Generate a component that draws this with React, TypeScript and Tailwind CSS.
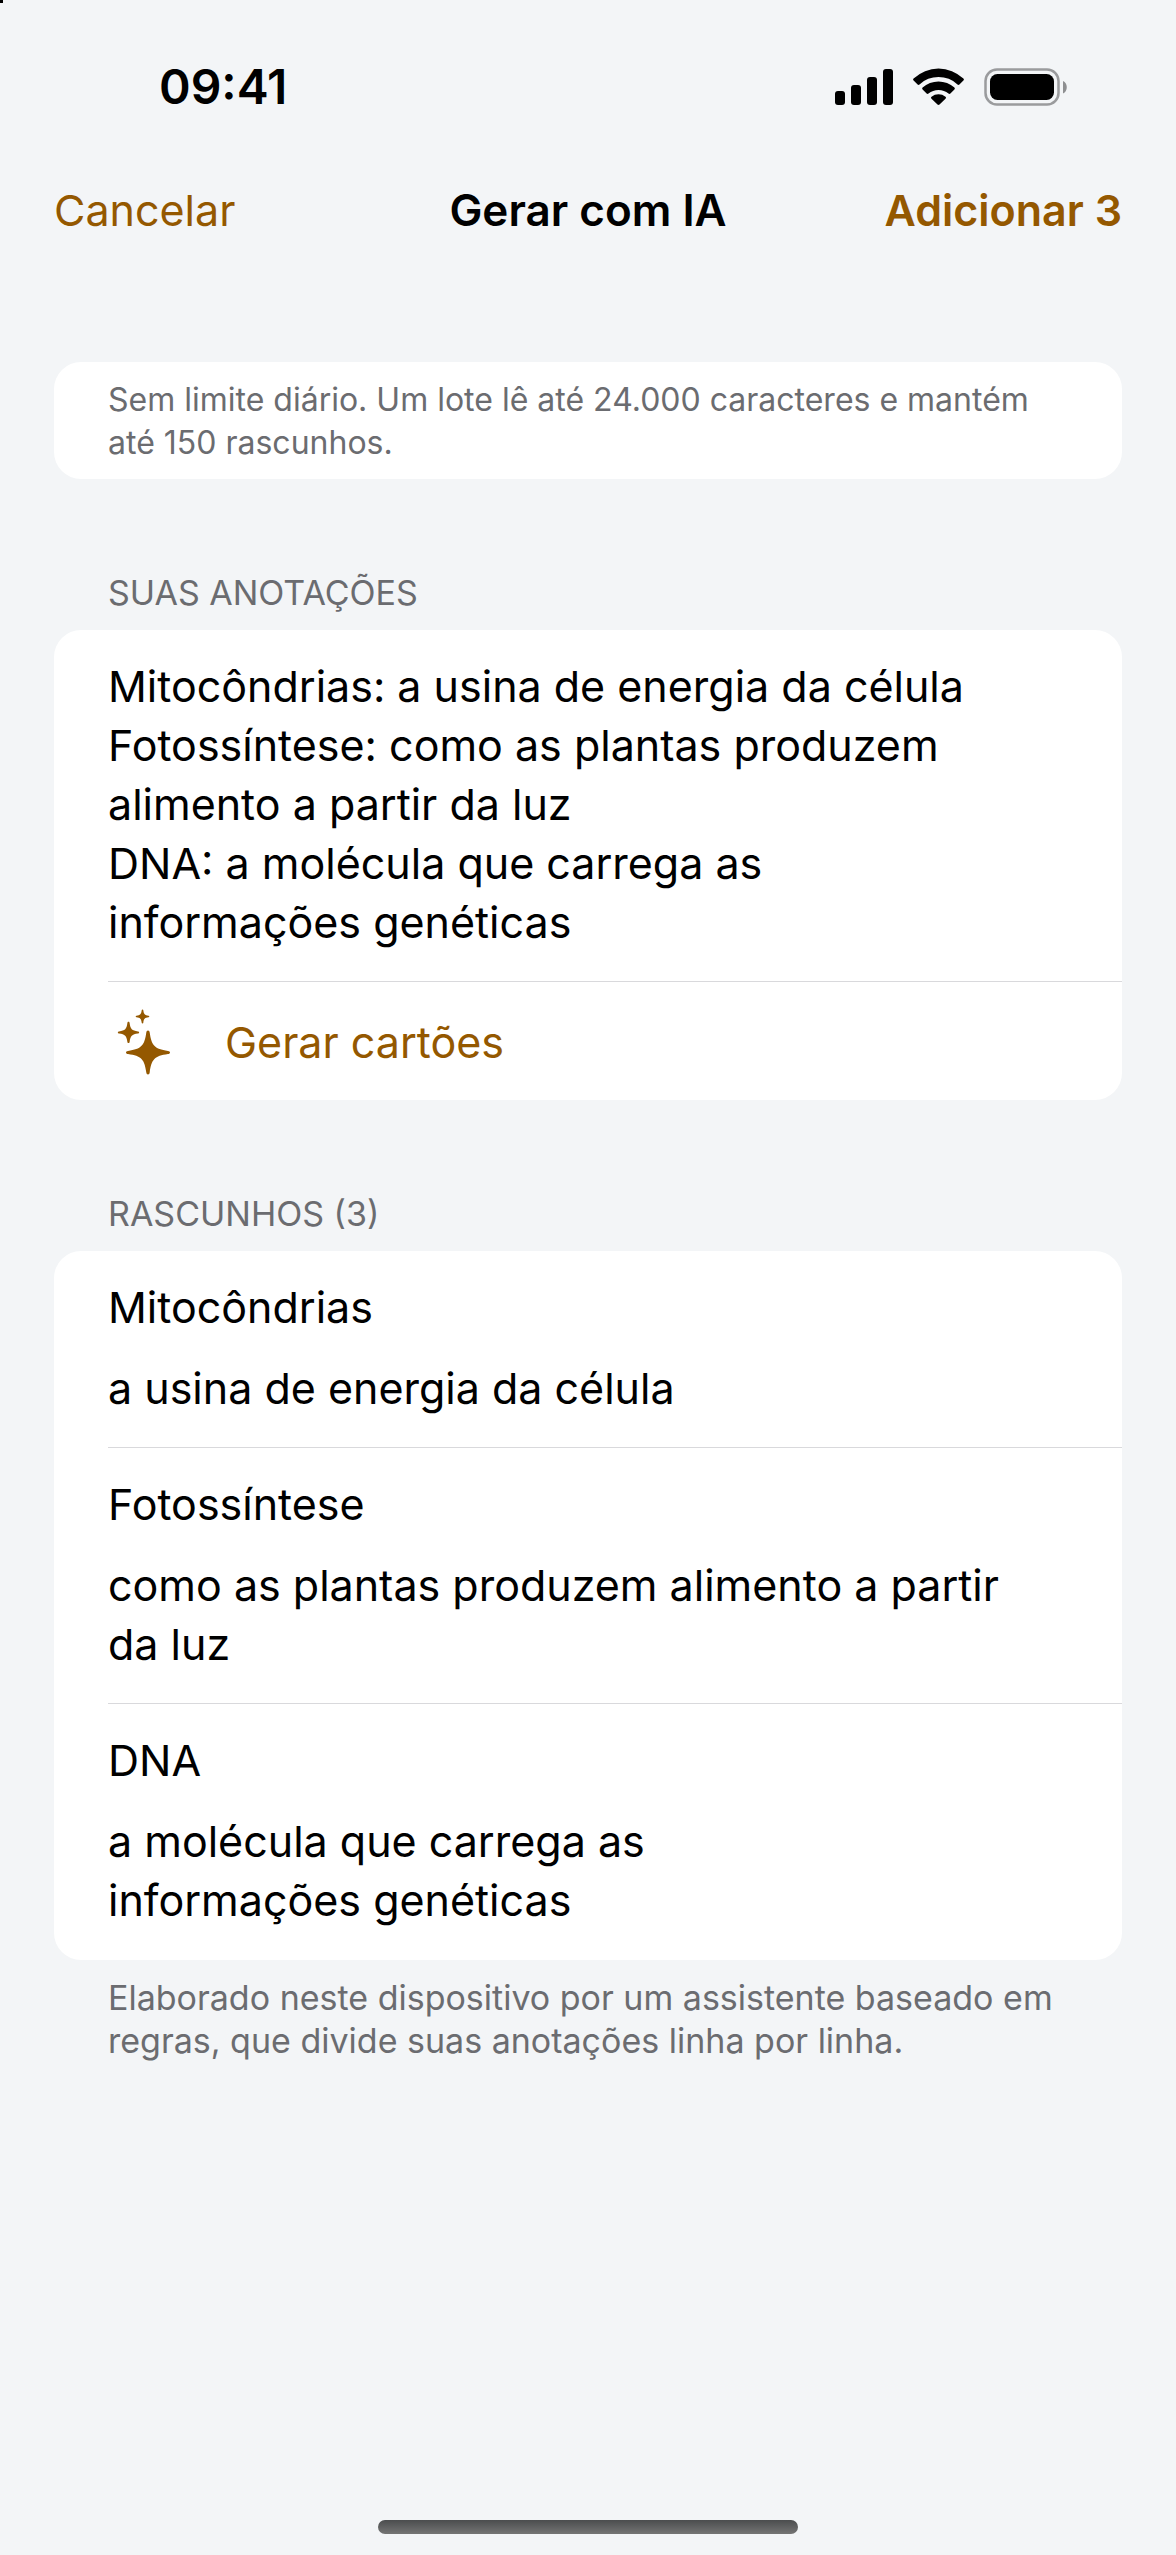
import React, { useState } from 'react';

interface Draft {
  id: string;
  front: string;
  back: string;
}

const initialNotes = [
  'Mitocôndrias: a usina de energia da célula',
  'Fotossíntese: como as plantas produzem alimento a partir da luz',
  'DNA: a molécula que carrega as\ninformações genéticas',
].join('\n');

const initialDrafts: Draft[] = [
  { id: '1', front: 'Mitocôndrias', back: 'a usina de energia da célula' },
  { id: '2', front: 'Fotossíntese', back: 'como as plantas produzem alimento a partir\nda luz' },
  { id: '3', front: 'DNA', back: 'a molécula que carrega as\ninformações genéticas' },
];

const StatusIcons: React.FC = () => (
  <svg width="234" height="40" viewBox="0 0 234 40" aria-hidden="true">
    {/* Signal */}
    <rect x="1" y="24" width="10" height="14" rx="3" />
    <rect x="17" y="18" width="10" height="20" rx="3" />
    <rect x="33" y="10" width="10" height="28" rx="3" />
    <rect x="49" y="2" width="10" height="36" rx="3" />
    {/* Wi-Fi */}
    <path d="M79.6 11.6a1.4 1.4 0 0 0 0 2l4 3.9c.5.5 1.3.5 1.9 0a27.5 27.5 0 0 1 38 0c.6.5 1.4.5 1.9 0l4-3.9a1.4 1.4 0 0 0 0-2a36 36 0 0 0-49.8 0z" />
    <path d="M88.6 20.6a1.4 1.4 0 0 0 0 2l4 3.9c.5.5 1.3.5 1.9.1a15.5 15.5 0 0 1 20 0c.6.4 1.4.4 1.9-.1l4-3.9a1.4 1.4 0 0 0 0-2a23.5 23.5 0 0 0-31.8 0z" />
    <path d="M97.5 29.7a1.3 1.3 0 0 0 0 2l6 5.9c.6.6 1.4.6 2 0l6-5.9a1.3 1.3 0 0 0 0-2a11.5 11.5 0 0 0-14 0z" />
    {/* Battery */}
    <rect x="151.5" y="2.5" width="73" height="35" rx="11.5" fill="none" stroke="#9a9b9d" strokeWidth="2.5" />
    <rect x="156" y="7" width="64" height="26" rx="7.5" />
    <path d="M229 14c5 2 5 10.5 0 12.5z" fill="#8e8f91" />
  </svg>
);

const SparklesIcon: React.FC = () => (
  <svg width="54" height="72" viewBox="0 0 54 72" fill="currentColor" aria-hidden="true">
    <path d="M31 24.5c1 0 1.5.7 1.7 2C34.5 39.5 37.5 43 51 44.9c1.3.2 2 .7 2 1.6s-.7 1.4-2 1.6C37.5 50 34.5 53.5 32.7 66.5c-.2 1.3-.7 2-1.7 2s-1.5-.7-1.7-2C27.5 53.5 24.5 50 11 48.1c-1.3-.2-2-.7-2-1.6s.7-1.4 2-1.6C24.5 43 27.5 39.5 29.3 26.5c.2-1.3.7-2 1.7-2z" />
    <path d="M11.5 15.8c.7 0 1 .5 1.1 1.2.8 6 2.3 7.6 8.4 8.4.8.1 1.2.4 1.2 1s-.4 1-1.2 1.1c-6.1.8-7.6 2.4-8.4 8.4-.1.7-.4 1.2-1.1 1.2s-1-.5-1.1-1.2c-.8-6-2.3-7.6-8.4-8.4C1.2 27.4.8 27 .8 26.4s.4-.9 1.2-1c6.1-.8 7.6-2.4 8.4-8.4.1-.7.4-1.2 1.1-1.2z" />
    <path d="M25.5 3.5c.5 0 .7.3.8.8.5 4 1.5 4.9 5.2 5.4.5.1.8.3.8.8s-.3.7-.8.8c-3.7.5-4.7 1.4-5.2 5.4-.1.5-.3.8-.8.8s-.7-.3-.8-.8c-.5-4-1.5-4.9-5.2-5.4-.5-.1-.8-.3-.8-.8s.3-.7.8-.8c3.7-.5 4.7-1.4 5.2-5.4.1-.5.3-.8.8-.8z" />
  </svg>
);

const App: React.FC = () => {
  const [notes, setNotes] = useState(initialNotes);
  const [drafts, setDrafts] = useState(initialDrafts);

  const updateDraft = (id: string, changes: Partial<Draft>) => {
    setDrafts(drafts.map((draft) => (draft.id === id ? { ...draft, ...changes } : draft)));
  };

  return (
    <div className="relative min-h-screen flex flex-col bg-[#f3f5f7] text-black font-['Inter',sans-serif] text-[43px] leading-[59px]">
      <div className="absolute top-0 left-0 size-[3px] bg-black" />

      <div className="flex items-center justify-between pt-[57px] pl-[159px] pr-[108px]">
        <span className="text-[48px] leading-[60px] font-semibold">09:41</span>
        <StatusIcons />
      </div>

      <header className="grid grid-cols-[1fr_auto_1fr] items-center px-[54px] pt-16">
        <button className="justify-self-start text-[#945800]">Cancelar</button>
        <h1 className="text-[44px] leading-[59px] font-semibold">Gerar com IA</h1>
        <button className="justify-self-end font-semibold text-[#945800]">
          Adicionar {drafts.length}
        </button>
      </header>

      <main className="px-[54px] pt-[122px]">
        <p className="rounded-[27px] bg-white px-[54px] pt-4 pb-[15px] text-[32px] leading-[43px] text-[#6b6c70]">
          Sem limite diário. Um lote lê até 24.000 caracteres e mantém até 150 rascunhos.
        </p>

        <section className="pt-[92px]">
          <h2 className="px-[54px] pb-[15px] text-[34px] leading-[44px] text-[#6b6c70]">
            <label htmlFor="notes">SUAS ANOTAÇÕES</label>
          </h2>
          <div className="rounded-[27px] bg-white pl-[54px]">
            <div className="border-b border-[#d9d9dc] pt-[27px] pb-[29px] pr-[54px]">
              <textarea
                id="notes"
                value={notes}
                onChange={(e) => setNotes(e.target.value)}
                className="block w-full resize-none overflow-hidden field-sizing-content outline-none"
              />
            </div>
            <button className="flex w-full items-center gap-[54px] pt-6 pb-[22px] pl-[9px] text-[#945800]">
              <SparklesIcon />
              <span>Gerar cartões</span>
            </button>
          </div>
        </section>

        <section className="pt-[92px]">
          <h2 className="px-[54px] pb-[15px] text-[34px] leading-[44px] text-[#6b6c70]">
            RASCUNHOS ({drafts.length})
          </h2>
          <div className="rounded-[27px] bg-white pl-[54px]">
            {drafts.map((draft) => (
              <div
                key={draft.id}
                className="flex flex-col gap-[22px] border-b border-[#d9d9dc] pt-[27px] pb-[29px] pr-[54px] last:border-transparent"
              >
                <input
                  type="text"
                  aria-label="Frente"
                  value={draft.front}
                  onChange={(e) => updateDraft(draft.id, { front: e.target.value })}
                  className="block h-[59px] w-full outline-none"
                />
                <textarea
                  aria-label="Verso"
                  value={draft.back}
                  onChange={(e) => updateDraft(draft.id, { back: e.target.value })}
                  className="block w-full resize-none overflow-hidden field-sizing-content outline-none"
                />
              </div>
            ))}
          </div>
          <p className="px-[54px] pt-4 text-[34px] leading-[43px] text-[#6b6c70]">
            Elaborado neste dispositivo por um assistente baseado em regras, que divide suas anotações linha por linha.
          </p>
        </section>
      </main>

      <div className="mx-auto mt-auto mb-[21px] h-[14px] w-[420px] rounded-full bg-linear-to-b from-[#4b4d4e] to-[#757575]" />
    </div>
  );
};

export default App;
